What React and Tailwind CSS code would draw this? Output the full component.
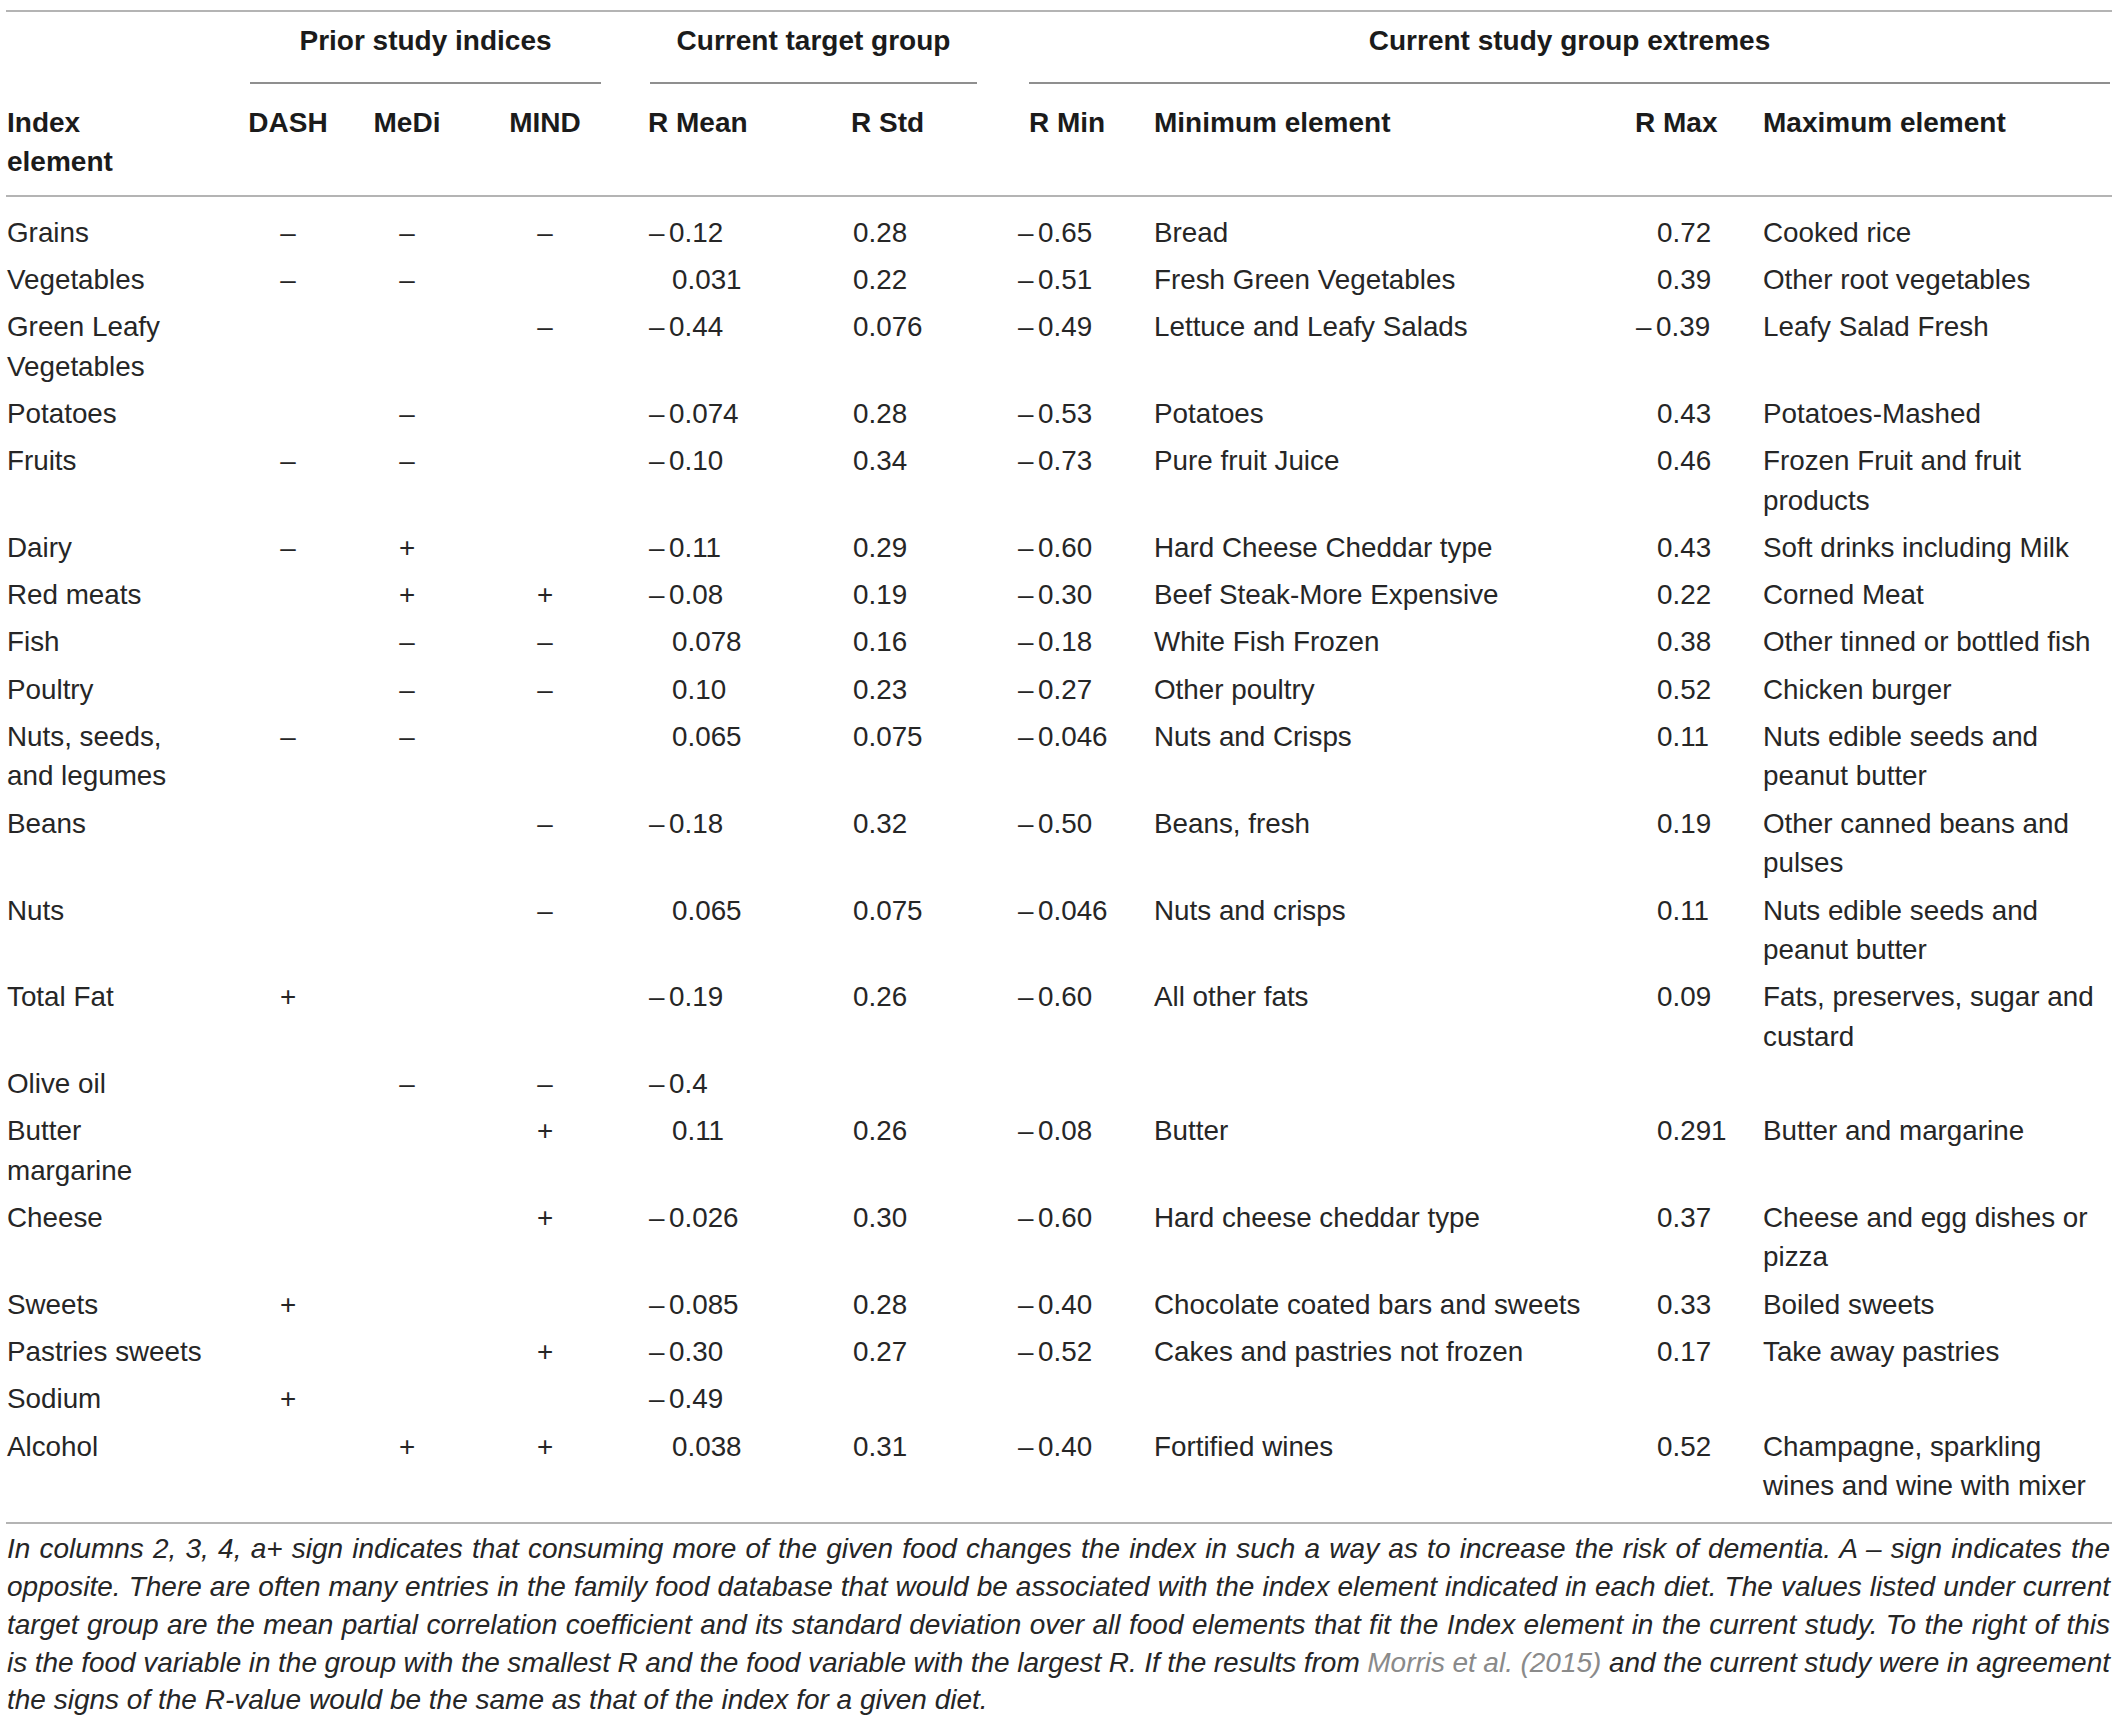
import React from "react";

const COLS =
  "grid grid-cols-[240px_84px_154px_122px_245px_167px_136px_481px_128px_349px]";

const rows = [
  { name: ["Grains"], d: "–", m: "–", mi: "–", mean: "-0.12", std: "0.28", min: "-0.65", minEl: ["Bread"], max: "0.72", maxEl: ["Cooked rice"] },
  { name: ["Vegetables"], d: "–", m: "–", mi: "", mean: "0.031", std: "0.22", min: "-0.51", minEl: ["Fresh Green Vegetables"], max: "0.39", maxEl: ["Other root vegetables"] },
  { name: ["Green Leafy", "Vegetables"], d: "", m: "", mi: "–", mean: "-0.44", std: "0.076", min: "-0.49", minEl: ["Lettuce and Leafy Salads"], max: "-0.39", maxEl: ["Leafy Salad Fresh"] },
  { name: ["Potatoes"], d: "", m: "–", mi: "", mean: "-0.074", std: "0.28", min: "-0.53", minEl: ["Potatoes"], max: "0.43", maxEl: ["Potatoes-Mashed"] },
  { name: ["Fruits"], d: "–", m: "–", mi: "", mean: "-0.10", std: "0.34", min: "-0.73", minEl: ["Pure fruit Juice"], max: "0.46", maxEl: ["Frozen Fruit and fruit", "products"] },
  { name: ["Dairy"], d: "–", m: "+", mi: "", mean: "-0.11", std: "0.29", min: "-0.60", minEl: ["Hard Cheese Cheddar type"], max: "0.43", maxEl: ["Soft drinks including Milk"] },
  { name: ["Red meats"], d: "", m: "+", mi: "+", mean: "-0.08", std: "0.19", min: "-0.30", minEl: ["Beef Steak-More Expensive"], max: "0.22", maxEl: ["Corned Meat"] },
  { name: ["Fish"], d: "", m: "–", mi: "–", mean: "0.078", std: "0.16", min: "-0.18", minEl: ["White Fish Frozen"], max: "0.38", maxEl: ["Other tinned or bottled fish"] },
  { name: ["Poultry"], d: "", m: "–", mi: "–", mean: "0.10", std: "0.23", min: "-0.27", minEl: ["Other poultry"], max: "0.52", maxEl: ["Chicken burger"] },
  { name: ["Nuts, seeds,", "and legumes"], d: "–", m: "–", mi: "", mean: "0.065", std: "0.075", min: "-0.046", minEl: ["Nuts and Crisps"], max: "0.11", maxEl: ["Nuts edible seeds and", "peanut butter"] },
  { name: ["Beans"], d: "", m: "", mi: "–", mean: "-0.18", std: "0.32", min: "-0.50", minEl: ["Beans, fresh"], max: "0.19", maxEl: ["Other canned beans and", "pulses"] },
  { name: ["Nuts"], d: "", m: "", mi: "–", mean: "0.065", std: "0.075", min: "-0.046", minEl: ["Nuts and crisps"], max: "0.11", maxEl: ["Nuts edible seeds and", "peanut butter"] },
  { name: ["Total Fat"], d: "+", m: "", mi: "", mean: "-0.19", std: "0.26", min: "-0.60", minEl: ["All other fats"], max: "0.09", maxEl: ["Fats, preserves, sugar and", "custard"] },
  { name: ["Olive oil"], d: "", m: "–", mi: "–", mean: "-0.4", std: "", min: "", minEl: [], max: "", maxEl: [] },
  { name: ["Butter", "margarine"], d: "", m: "", mi: "+", mean: "0.11", std: "0.26", min: "-0.08", minEl: ["Butter"], max: "0.291", maxEl: ["Butter and margarine"] },
  { name: ["Cheese"], d: "", m: "", mi: "+", mean: "-0.026", std: "0.30", min: "-0.60", minEl: ["Hard cheese cheddar type"], max: "0.37", maxEl: ["Cheese and egg dishes or", "pizza"] },
  { name: ["Sweets"], d: "+", m: "", mi: "", mean: "-0.085", std: "0.28", min: "-0.40", minEl: ["Chocolate coated bars and sweets"], max: "0.33", maxEl: ["Boiled sweets"] },
  { name: ["Pastries sweets"], d: "", m: "", mi: "+", mean: "-0.30", std: "0.27", min: "-0.52", minEl: ["Cakes and pastries not frozen"], max: "0.17", maxEl: ["Take away pastries"] },
  { name: ["Sodium"], d: "+", m: "", mi: "", mean: "-0.49", std: "", min: "", minEl: [], max: "", maxEl: [] },
  { name: ["Alcohol"], d: "", m: "+", mi: "+", mean: "0.038", std: "0.31", min: "-0.40", minEl: ["Fortified wines"], max: "0.52", maxEl: ["Champagne, sparkling", "wines and wine with mixer"] },
];

function Lines({ items }) {
  return items.map((t, i) => (
    <div key={i} className="whitespace-nowrap">
      {t}
    </div>
  ));
}

function Num({ v, wide }) {
  if (!v) return null;
  const neg = v.startsWith("-");
  const posBox = wide ? "inline-block w-[23px] invisible" : "inline-block w-[21px] invisible";
  return (
    <span className="whitespace-nowrap">
      <span className={neg ? "inline-block w-[20px]" : posBox}>–</span>
      {neg ? v.slice(1) : v}
    </span>
  );
}

const cell = "py-[3.95px]";
const just = "text-justify [text-align-last:justify] [word-spacing:-3px]";

export default function App() {
  return (
    <div className="w-[2118px] min-h-[1721px] bg-white px-[6px] pt-[10px] font-['Liberation_Sans',Arial,sans-serif] text-[#262626]">
      <div className="h-[2px] bg-[#b4b4b4]" />

      {/* Group header row */}
      <div className={`${COLS} text-[28px] leading-[39.4px] font-bold text-[#1b1b1b]`}>
        <div />
        <div className="col-span-3 pt-[9px] ml-[4px] mr-[5px]">
          <div className="text-center whitespace-nowrap">Prior study indices</div>
          <div className="mt-[21.5px] h-[2px] bg-[#8f8f8f]" />
        </div>
        <div className="col-span-2 pt-[9px] ml-[44px] mr-[41px]">
          <div className="text-center whitespace-nowrap">Current target group</div>
          <div className="mt-[21.5px] h-[2px] bg-[#8f8f8f]" />
        </div>
        <div className="col-span-4 pt-[9px] ml-[11px] mr-[2px]">
          <div className="text-center whitespace-nowrap">Current study group extremes</div>
          <div className="mt-[21.5px] h-[2px] bg-[#8f8f8f]" />
        </div>
      </div>

      {/* Column header row */}
      <div className={`${COLS} text-[28px] leading-[39.2px] font-bold text-[#1b1b1b] pt-[19px] pb-[14px]`}>
        <div className="pl-[1px]">
          <div>Index</div>
          <div>element</div>
        </div>
        <div className="text-center">DASH</div>
        <div className="text-center">MeDi</div>
        <div className="text-center">MIND</div>
        <div className="pl-[42px]">R Mean</div>
        <div>R Std</div>
        <div className="pl-[11px]">R Min</div>
        <div>Minimum element</div>
        <div>R Max</div>
        <div>Maximum element</div>
      </div>

      <div className="h-[2px] bg-[#b4b4b4]" />

      {/* Body */}
      <div className="pt-[11.3px] pb-[12.8px] text-[27.8px] leading-[39.42px]">
        {rows.map((r, i) => (
          <div key={i} className={COLS}>
            <div className={`${cell} pl-[1px]`}>
              <Lines items={r.name} />
            </div>
            <div className={`${cell} text-center`}>{r.d}</div>
            <div className={`${cell} text-center`}>{r.m}</div>
            <div className={`${cell} text-center`}>{r.mi}</div>
            <div className={`${cell} pl-[43px]`}>
              <Num v={r.mean} wide />
            </div>
            <div className={`${cell} pl-[2px]`}>{r.std}</div>
            <div className={cell}>
              <Num v={r.min} />
            </div>
            <div className={cell}>
              <Lines items={r.minEl} />
            </div>
            <div className={`${cell} pl-[1px]`}>
              <Num v={r.max} />
            </div>
            <div className={cell}>
              <Lines items={r.maxEl} />
            </div>
          </div>
        ))}
      </div>

      <div className="h-[2px] bg-[#b4b4b4]" />

      {/* Footnote */}
      <div className="pt-[6px] pl-[1px] pr-[2px] italic text-[28px] leading-[37.8px] text-[#262626]">
        <p className={just}>
          In columns 2, 3, 4, a+ sign indicates that consuming more of the given food changes the index in such a way as to increase the risk of dementia. A – sign indicates the
        </p>
        <p className={just}>
          opposite. There are often many entries in the family food database that would be associated with the index element indicated in each diet. The values listed under current
        </p>
        <p className={just}>
          target group are the mean partial correlation coefficient and its standard deviation over all food elements that fit the Index element in the current study. To the right of this
        </p>
        <p className={just}>
          is the food variable in the group with the smallest R and the food variable with the largest R. If the results from{" "}
          <span className="text-[#8a8a8a]">Morris et al. (2015)</span> and the current study were in agreement
        </p>
        <p>the signs of the R-value would be the same as that of the index for a given diet.</p>
      </div>
    </div>
  );
}
